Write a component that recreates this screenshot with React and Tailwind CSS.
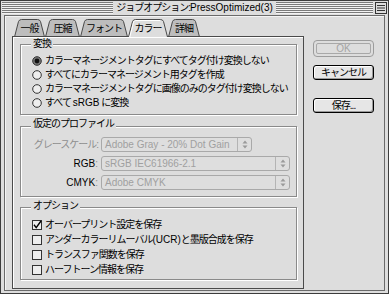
const tabs = [
  { label: "一般", w: 31 },
  { label: "圧縮", w: 35 },
  { label: "フォント", w: 48 },
  { label: "カラー", w: 40, active: true },
  { label: "詳細", w: 32 },
];

const Tab = ({ label, w, active }) => {
  const h = 18;
  const edge = `M0.5 ${h} L4.5 2.5 Q5.3 0.5 7.5 0.5 L${w - 7.5} 0.5 Q${w - 5.3} 0.5 ${w - 4.5} 2.5 L${w - 0.5} ${h}`;
  return (
    <div className={`relative flex items-center justify-center ${active ? "z-10" : ""}`} style={{ width: w, height: h }}>
      <svg className="absolute inset-0" width={w} height={h}>
        <path d={edge} fill={active ? "#dddddd" : "#bdbdbd"} stroke="#4a4a4a" />
        {active && <path d={`M1.8 ${h} L5.6 3 Q6.2 1.5 7.8 1.5 L${w - 8} 1.5`} fill="none" stroke="#fff" />}
      </svg>
      <span className="relative pt-px text-[10px] leading-[12px] tracking-[-1px]">{label}</span>
    </div>
  );
};

const Radio = ({ on, children }) => (
  <div className="flex h-[14px] items-center">
    <svg width="10" height="10" viewBox="0 0 10 10">
      <circle cx="5" cy="5" r="4.3" fill={on ? "#777" : "#eeeeee"} stroke="#333" />
      {on && <circle cx="5" cy="5" r="2.4" fill="#111" />}
    </svg>
    <span className="ml-[3px] text-[10px] leading-[12px] tracking-[-1px]">{children}</span>
  </div>
);

const Check = ({ on, children }) => (
  <div className="flex h-[15px] items-center">
    <svg width="10" height="10" viewBox="0 0 10 10">
      <rect x="0.5" y="0.5" width="9" height="9" fill="#eeeeee" stroke="#333" />
      {on && <path d="M2 4.8 L4.2 7.6 L9 1" fill="none" stroke="#000" strokeWidth="1.4" />}
    </svg>
    <span className="ml-[3px] text-[10px] leading-[12px] tracking-[-1px]">{children}</span>
  </div>
);

const Popup = ({ text, w }) => (
  <div className={`flex h-[15px] ${w} items-center rounded-[3px] border border-[#a9a9a9] bg-[#dedede]`}>
    <span className="flex-1 truncate pl-[3px] text-[10px] leading-[12px] text-[#a0a0a0]">{text}</span>
    <div className="flex h-full w-[14px] items-center justify-center border-l border-[#b4b4b4]">
      <svg width="6" height="9" viewBox="0 0 6 9">
        <path d="M3 0.5 L5.5 3.5 H0.5Z M3 8.5 L5.5 5.5 H0.5Z" fill="#9a9a9a" />
      </svg>
    </div>
  </div>
);

const Group = ({ title, top, className, children }) => (
  <div className={`relative border border-[#8a8a8a] pl-[11px] shadow-[inset_1px_1px_0_#fff,1px_1px_0_#fff] ${className}`}>
    <span className={`absolute left-[10px] ${top} bg-[#dddddd] px-[2px] text-[10px] leading-[12px] tracking-[-1px]`}>{title}</span>
    {children}
  </div>
);

const Stripes = () => (
  <div className="h-[12px] flex-1 bg-[image:repeating-linear-gradient(to_bottom,#7a7a7a_0px,#7a7a7a_1px,#f2f2f2_1px,#f2f2f2_2px)]" />
);

const Button = ({ children, className }) => (
  <div className={`flex h-[15px] w-[61px] items-center justify-center rounded-[3px] border border-black bg-[#e6e6e6] text-[10px] leading-[12px] tracking-[-1px] shadow-[inset_-1px_-1px_0_#9a9a9a,inset_1px_1px_0_#fff] ${className}`}>
    {children}
  </div>
);

const App = () => {
  return (
    <div className="h-[294px] w-[389px] border border-[#3c3c3c] bg-[#dddddd] font-['Liberation_Sans','Noto_Sans_CJK_JP',sans-serif] text-black">
      {/* title bar */}
      <div className="flex h-[14px] items-center pl-[1px] pr-[1px]">
        <Stripes />
        <span className="px-[3px] text-[10px] leading-[12px]">
          <span className="tracking-[-1px]">ジョブオプション:</span>PressOptimized(3)
        </span>
        <div className="flex flex-1 items-center">
          <Stripes />
          <svg className="ml-[2px]" width="12" height="12" viewBox="0 0 12 12">
            <rect x="0.5" y="0.5" width="11" height="11" fill="#dcdcdc" stroke="#333" />
            <path d="M2 3.5 H10 M2 6 H10 M2 8.5 H10" stroke="#333" />
          </svg>
        </div>
      </div>

      <div className="mx-[3px] mb-[2px] flex h-[276px] border border-[#6a6a6a] pb-px pl-[7px] pt-[3px] shadow-[inset_1px_1px_0_#f4f4f4]">
        <div className="flex w-[292px] flex-col">
          <div className="-mb-px ml-[2px] flex h-[18px]">
            {tabs.map((t) => (
              <Tab key={t.label} {...t} />
            ))}
          </div>

          <div className="relative h-[253px] border border-[#4a4a4a] bg-[#dddddd] pl-[7px] pr-[6px] shadow-[inset_1px_1px_0_#fff]">
            <Group title="変換" top="top-[-7px]" className="mt-[7px] h-[71px] pt-[9px]">
              <Radio on>カラーマネージメントタグにすべてタグ付け変換しない</Radio>
              <Radio>すべてにカラーマネージメント用タグを作成</Radio>
              <Radio>カラーマネージメントタグに画像のみのタグ付け変換しない</Radio>
              <Radio>
                すべて <span className="tracking-normal">sRGB</span> に変換
              </Radio>
            </Group>

            <Group title="仮定のプロファイル" top="top-[-9px]" className="mt-[11px] flex h-[71px] flex-col gap-[4px] !pl-0 pt-[10px]">
              <div className="flex h-[15px] items-center">
                <span className="w-[77px] text-right text-[10px] leading-[12px] tracking-[-1px] text-[#8e8e8e]">グレースケール:</span>
                <div className="ml-[3px]">
                  <Popup text="Adobe Gray - 20% Dot Gain" w="w-[151px]" />
                </div>
              </div>
              <div className="flex h-[15px] items-center">
                <span className="w-[77px] text-right text-[10px] leading-[12px]">
                  RGB<span className="text-[#8e8e8e]">:</span>
                </span>
                <div className="ml-[3px]">
                  <Popup text="sRGB IEC61966-2.1" w="w-[189px]" />
                </div>
              </div>
              <div className="flex h-[15px] items-center">
                <span className="w-[77px] text-right text-[10px] leading-[12px]">
                  CMYK<span className="text-[#8e8e8e]">:</span>
                </span>
                <div className="ml-[3px]">
                  <Popup text="Adobe CMYK" w="w-[189px]" />
                </div>
              </div>
            </Group>

            <Group title="オプション" top="top-[-8px]" className="mt-[10px] h-[73px] pt-[9px]">
              <Check on>オーバープリント設定を保存</Check>
              <Check>
                アンダーカラーリムーバル<span className="tracking-normal">(UCR)</span>と墨版合成を保存
              </Check>
              <Check>トランスファ関数を保存</Check>
              <Check>ハーフトーン情報を保存</Check>
            </Group>
          </div>
        </div>

        <div className="ml-[9px] flex w-[61px] flex-col">
          <div className="mt-[21px] h-[17px] w-[61px] rounded-[4px] border border-[#9c9c9c] p-[2px]">
            <div className="flex h-full items-center justify-center rounded-[2px] border border-[#a8a8a8] text-[10px] leading-[10px] text-[#a4a4a4]">
              OK
            </div>
          </div>
          <Button className="mt-[8px]">キャンセル</Button>
          <Button className="mt-[18px]">保存...</Button>
        </div>
      </div>
    </div>
  );
};

export default App;
